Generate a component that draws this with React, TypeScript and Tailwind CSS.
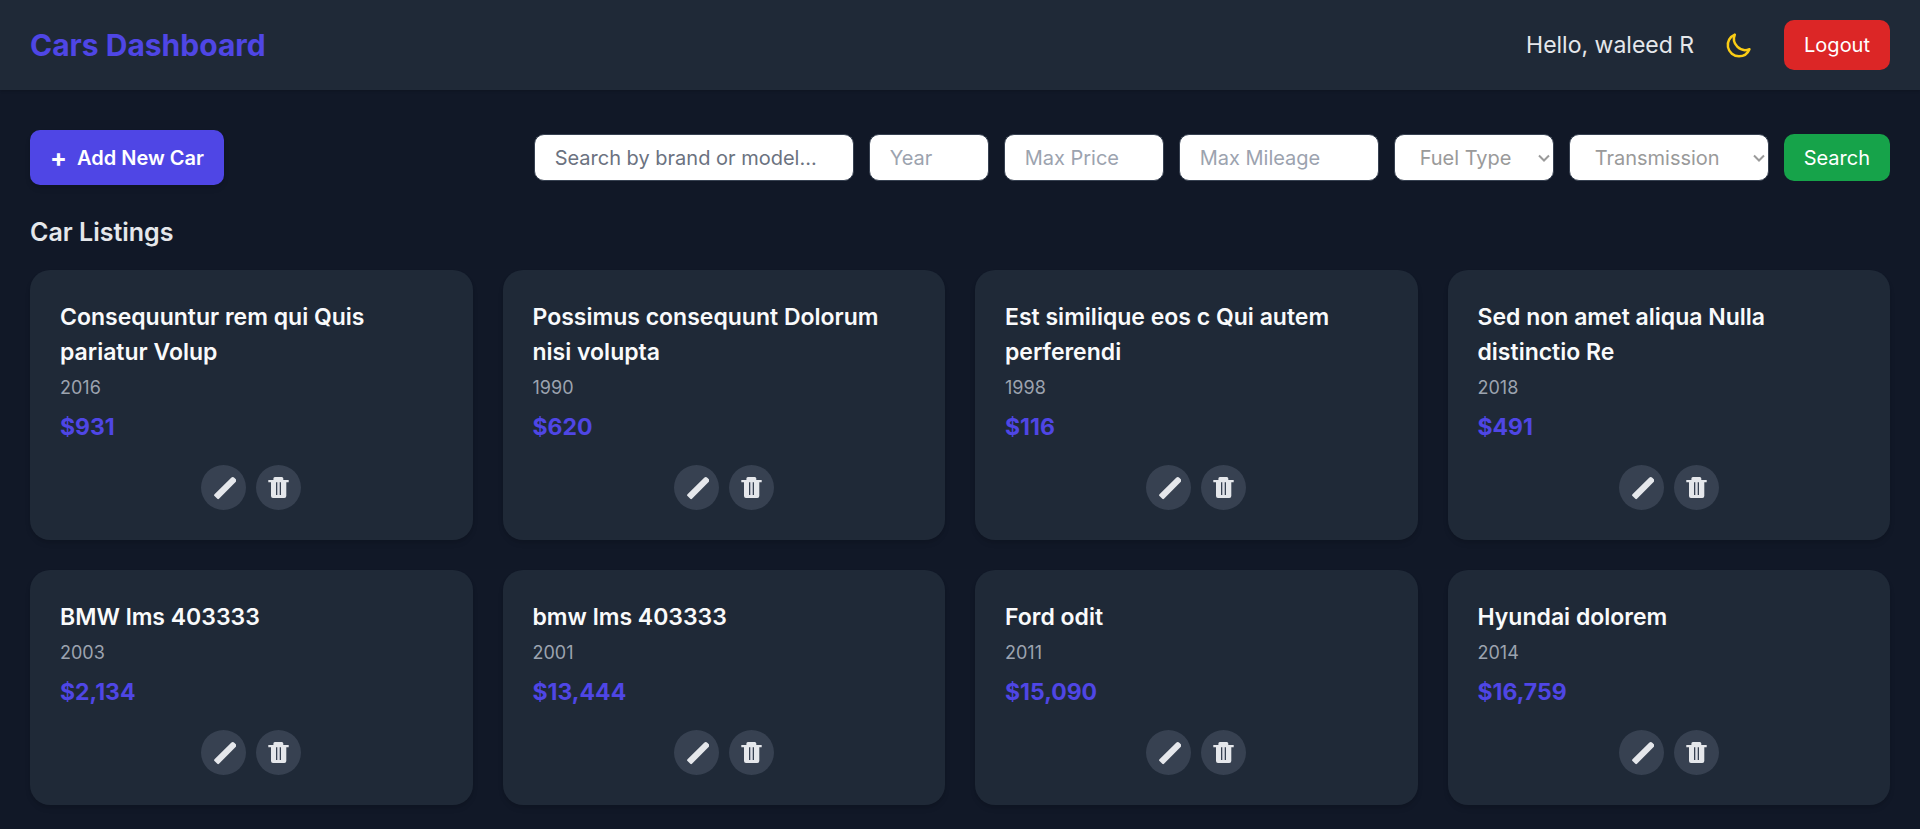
import { HiOutlineMoon } from "react-icons/hi";

type Car = { name: string; year: number; price: string };

const cars: Car[] = [
  { name: "Consequuntur rem qui Quis pariatur Volup", year: 2016, price: "$931" },
  { name: "Possimus consequunt Dolorum nisi volupta", year: 1990, price: "$620" },
  { name: "Est similique eos c Qui autem perferendi", year: 1998, price: "$116" },
  { name: "Sed non amet aliqua Nulla distinctio Re", year: 2018, price: "$491" },
  { name: "BMW lms 403333", year: 2003, price: "$2,134" },
  { name: "bmw lms 403333", year: 2001, price: "$13,444" },
  { name: "Ford odit", year: 2011, price: "$15,090" },
  { name: "Hyundai dolorem", year: 2014, price: "$16,759" },
];

const field = "h-[47px] rounded-[10px] border border-[#374151] bg-white text-[20px] leading-[30px]";
const textField = `${field} px-5 text-[#111827]`;
const selectField = `${field} appearance-none pr-5 pl-[25px] text-[#9a9a9a]`;

function PencilIcon() {
  return (
    <svg viewBox="0 0 25 25" className="size-[25px]" fill="currentColor" aria-hidden="true">
      <path d="M3.500 19.300 20.200 2.700a2.200 2.200 0 0 1 3.100 0l1.300 1.300a2.200 2.200 0 0 1 0 3.100L8 23.700a1.200 1.200 0 0 1-1.700 0L3.500 21a1.200 1.200 0 0 1 0-1.700Z" />
    </svg>
  );
}

function TrashIcon() {
  return (
    <svg viewBox="0 0 25 25" className="size-[25px]" fill="currentColor" aria-hidden="true">
      <path
        fillRule="evenodd"
        d="M7.400 4.900V3.500A1.500 1.500 0 0 1 8.900 2h6.900a1.500 1.500 0 0 1 1.500 1.500v1.400h5.400v2.400h-2.400v13.700a2 2 0 0 1-2 2H7a2 2 0 0 1-2-2V7.300H2.300V4.900ZM10 7.300V20h1.200V7.300Zm3.800 0V20H15V7.300Z"
      />
      <path d="M11.600 7.300v12.700M13.400 7.300v12.700" stroke="#9ca3af" strokeWidth=".6" />
    </svg>
  );
}

function Chevron() {
  return (
    <svg
      viewBox="0 0 12 8"
      className="pointer-events-none absolute top-5 right-1 h-2 w-3"
      fill="none"
      stroke="#9a9a9a"
      strokeWidth="2"
      aria-hidden="true"
    >
      <path d="m1 1.500 5 5 5-5" />
    </svg>
  );
}

function CarCard({ car }: { car: Car }) {
  return (
    <article className="rounded-[20px] bg-[#1f2937] p-[30px] shadow-md">
      <h3 className="text-[23px] leading-[35px] font-semibold text-[#f9fafb]">{car.name}</h3>
      <p className="mt-[5px] text-[18px] leading-[25px] text-[#9ca3af]">{car.year}</p>
      <p className="mt-[10px] text-[23px] leading-[35px] font-bold text-[#4f46e5]">{car.price}</p>
      <div className="mt-5 flex justify-center gap-[10px] text-[#e5e7eb]">
        <button type="button" aria-label="Edit" className="rounded-full bg-[#374151] p-[10px]">
          <PencilIcon />
        </button>
        <button type="button" aria-label="Delete" className="rounded-full bg-[#374151] p-[10px]">
          <TrashIcon />
        </button>
      </div>
    </article>
  );
}

export default function App() {
  return (
    <div className="min-h-screen bg-[#111827] font-['Inter',sans-serif] text-[20px] leading-[30px] text-[#e5e7eb]">
      <header className="flex items-center justify-between bg-[#1f2937] px-[30px] py-5 shadow-sm">
        <h1 className="text-[30px] leading-[40px] font-bold text-[#4f46e5]">Cars Dashboard</h1>
        <div className="flex items-center gap-[30px]">
          <span className="text-[23px] leading-[35px]">Hello, waleed R</span>
          <button type="button" aria-label="Toggle theme" className="text-[#facc15]">
            <HiOutlineMoon className="size-[30px]" />
          </button>
          <button type="button" className="rounded-[10px] bg-[#dc2626] px-5 py-[10px] text-white">
            Logout
          </button>
        </div>
      </header>

      <main className="px-[30px] pt-10 pb-6">
        <div className="flex flex-wrap items-center justify-between gap-[15px]">
          <button
            type="button"
            className="flex h-[55px] items-center gap-[10px] rounded-[10px] bg-[#4f46e5] px-5 font-semibold text-white shadow-md"
          >
            <span className="text-[25px] font-bold">+</span>
            <span>Add New Car</span>
          </button>
          <form className="flex flex-wrap items-center gap-[15px]">
            <input
              aria-label="Search by brand or model"
              placeholder="Search by brand or model..."
              className={`${textField} w-80 placeholder:text-[#6b7280]`}
            />
            <input aria-label="Year" placeholder="Year" className={`${textField} w-[120px] placeholder:text-[#9ca3af]`} />
            <input aria-label="Max price" placeholder="Max Price" className={`${textField} w-40 placeholder:text-[#9ca3af]`} />
            <input
              aria-label="Max mileage"
              placeholder="Max Mileage"
              className={`${textField} w-[200px] placeholder:text-[#9ca3af]`}
            />
            <div className="relative">
              <select aria-label="Fuel type" className={`${selectField} w-40`}>
                <option>Fuel Type</option>
              </select>
              <Chevron />
            </div>
            <div className="relative">
              <select aria-label="Transmission" className={`${selectField} w-[200px]`}>
                <option>Transmission</option>
              </select>
              <Chevron />
            </div>
            <button type="button" className="h-[47px] rounded-[10px] bg-[#16a34a] px-5 text-white">
              Search
            </button>
          </form>
        </div>

        <h2 className="mt-[30px] mb-5 text-[25px] leading-[35px] font-semibold">Car Listings</h2>
        <section className="grid grid-cols-1 gap-[30px] sm:grid-cols-2 lg:grid-cols-4">
          {cars.map((car) => (
            <CarCard key={car.name} car={car} />
          ))}
        </section>
      </main>
    </div>
  );
}
